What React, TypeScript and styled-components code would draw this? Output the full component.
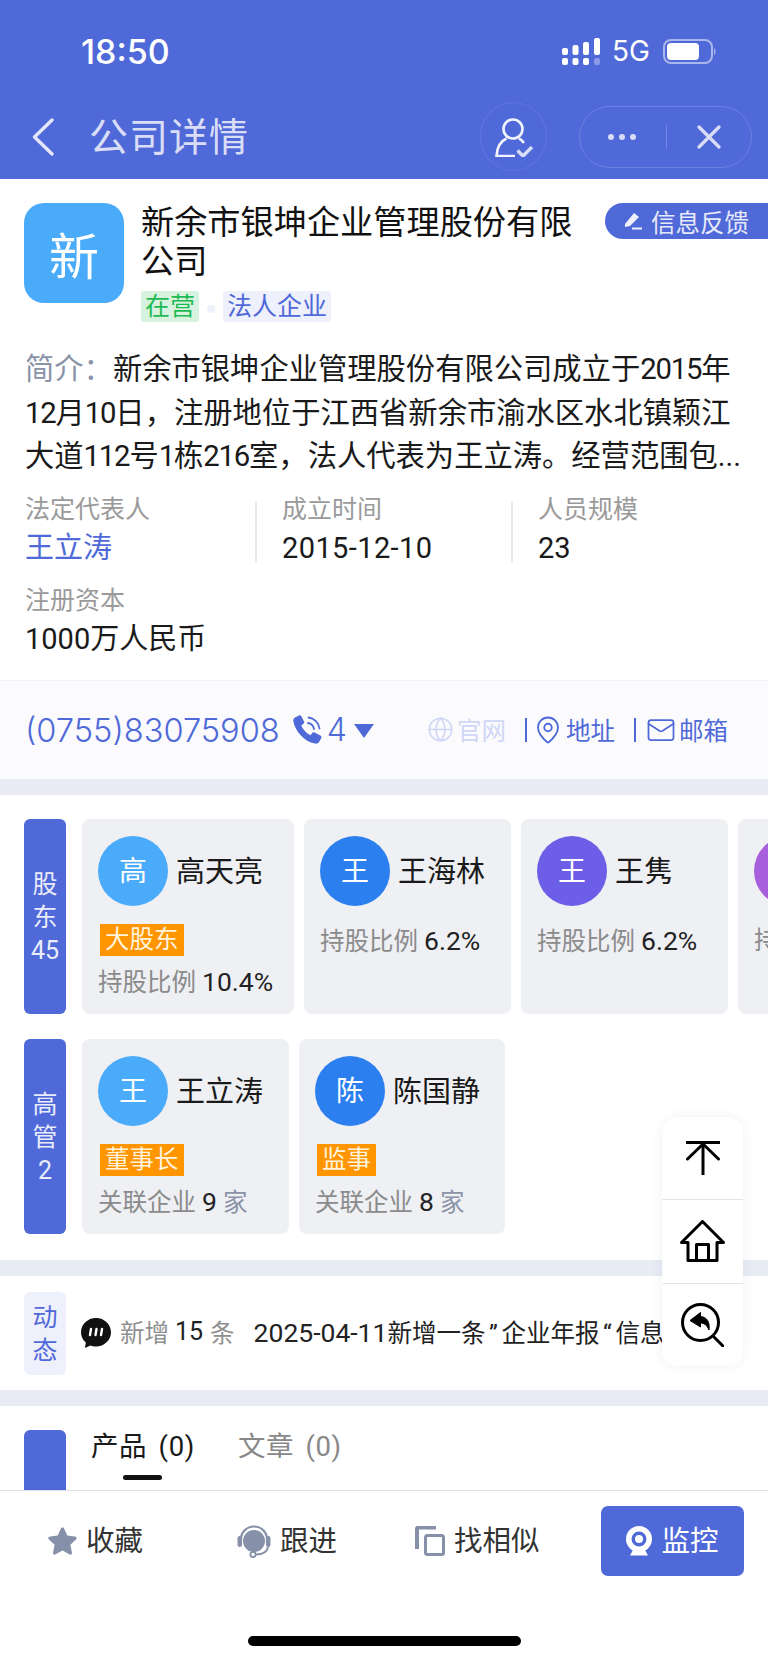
import React from 'react';
import styled, { createGlobalStyle } from 'styled-components';
import { Globe, Mail, MapPin } from 'lucide-react';

const BLUE = '#5069d8';
const FONT = 'Roboto, "Noto Sans CJK SC", "Noto Sans", sans-serif';

const GlobalStyle = createGlobalStyle`
  html, body {
    margin: 0;
    padding: 0;
    background: #fff;
  }
  * {
    box-sizing: border-box;
  }
`;

const Page = styled.div`
  width: 768px;
  height: 1663px;
  position: relative;
  display: flex;
  flex-direction: column;
  overflow: hidden;
  background: #fff;
  font-family: ${FONT};
  color: #1a1a1a;
`;

const Header = styled.header`
  flex: none;
  height: 179px;
  background: ${BLUE};
`;

const StatusBar = styled.div`
  height: 102px;
  display: flex;
  align-items: center;
  justify-content: space-between;
  padding: 0 51px 0 81px;
  color: #fff;
`;

const Time = styled.div`
  font-family: Inter, sans-serif;
  font-size: 34px;
  font-weight: 500;
`;

const StatusIcons = styled.div`
  display: flex;
  align-items: center;
`;

const NetworkLabel = styled.span`
  font-family: Inter, sans-serif;
  font-size: 28px;
  margin: 0 13px 0 12px;
`;

const NavBar = styled.div`
  height: 77px;
  display: flex;
  align-items: center;
  padding: 0 16px 8px 32px;
`;

const NavTitle = styled.h1`
  flex: 1;
  margin: 0 0 0 35px;
  padding-bottom: 6px;
  font-size: 39px;
  font-weight: 400;
  letter-spacing: 1px;
  color: #d9def6;
`;

const RoundButton = styled.div`
  width: 67px;
  height: 69px;
  border-radius: 50%;
  border: 1px solid #6075dc;
  display: flex;
  align-items: center;
  justify-content: center;
  margin-right: 32px;
`;

const Capsule = styled.div`
  width: 173px;
  height: 62px;
  border-radius: 31px;
  border: 1.5px solid #6b80e0;
  display: flex;
  align-items: center;
  justify-content: space-between;
  padding: 0 30px 0 28px;
`;

const CapsuleDots = styled.div`
  display: flex;
  gap: 5px;
`;

const CapsuleDot = styled.span`
  width: 6px;
  height: 6px;
  border-radius: 50%;
  background: #d9def6;
`;

const CapsuleDivider = styled.span`
  width: 1px;
  height: 24px;
  background: #7487e2;
`;

const Content = styled.main`
  flex: 1;
  min-height: 0;
  overflow: hidden;
`;

const Profile = styled.section`
  padding: 24px 0 26px;
`;

const CompanyHead = styled.div`
  display: flex;
  align-items: flex-start;
  padding-left: 24px;
`;

const CompanyLogo = styled.div`
  flex: none;
  width: 100px;
  height: 100px;
  border-radius: 20px;
  background: #4aabfa;
  color: #fff;
  font-size: 50px;
  display: flex;
  align-items: center;
  justify-content: center;
`;

const CompanyInfo = styled.div`
  flex: 1;
  margin-left: 17px;
`;

const CompanyName = styled.h2`
  margin: 0;
  width: 440px;
  font-size: 33.2px;
  line-height: 39px;
  font-weight: 400;
  color: #111;
`;

const TagRow = styled.div`
  display: flex;
  align-items: center;
  margin-top: 10px;
`;

const Tag = styled.span<{ $bg: string; $color: string }>`
  height: 31px;
  line-height: 31px;
  padding: 0 4px;
  border-radius: 3px;
  font-size: 25px;
  background: ${(p) => p.$bg};
  color: ${(p) => p.$color};
`;

const TagDot = styled.span`
  width: 8px;
  height: 8px;
  margin: 4px 8px 0;
  border-radius: 50%;
  background: #eef0fb;
`;

const FeedbackPill = styled.div`
  flex: none;
  width: 163px;
  height: 36px;
  border-radius: 18px 0 0 18px;
  background: ${BLUE};
  color: #e6e9fa;
  font-size: 24.5px;
  display: flex;
  align-items: center;
  padding-left: 19px;
  gap: 9px;
`;

const Intro = styled.p`
  margin: 26px 0 0;
  padding: 0 25px;
  width: 768px;
  font-size: 29.3px;
  line-height: 43.5px;
  color: #1a1a1a;
`;

const IntroLine = styled.span`
  display: block;
  white-space: nowrap;
`;

const IntroLabel = styled.span`
  color: #8a93a8;
`;

const Num = styled.span`
  letter-spacing: -1.2px;
`;

const Facts = styled.div`
  display: grid;
  grid-template-columns: 232px 256px 1fr;
  row-gap: 29px;
  margin: 22px 0 0 25px;
`;

const Fact = styled.div`
  height: 62px;
  display: flex;
  flex-direction: column;
  gap: 14px;
  padding-left: 25px;
  border-right: 2px solid #e8e9ed;
  &:nth-child(3n + 1) {
    padding-left: 0;
  }
  &:nth-child(3n),
  &:last-child {
    border-right: none;
  }
`;

const FactLabel = styled.div`
  font-size: 25px;
  line-height: 18px;
  color: #9a9a9a;
`;

const FactValue = styled.div<{ $link?: boolean }>`
  font-size: 29px;
  line-height: 30px;
  white-space: nowrap;
  color: ${(p) => (p.$link ? BLUE : '#1a1a1a')};
`;

const DateValue = styled(FactValue)`
  letter-spacing: 0.4px;
`;

const ContactBar = styled.div`
  height: 99px;
  display: flex;
  align-items: center;
  padding: 0 40px 0 25px;
  background: #fbfbfd;
  border-top: 1px solid #f3f3f6;
  color: ${BLUE};
`;

const PhoneNumber = styled.span`
  font-family: Inter, sans-serif;
  font-size: 32.6px;
  font-weight: 300;
  margin-right: 13px;
`;

const PhoneCount = styled.span`
  font-family: Inter, sans-serif;
  font-size: 32px;
  font-weight: 300;
  margin: 0 7px 0 5px;
`;

const CaretDown = styled.span`
  width: 0;
  height: 0;
  margin-top: 2px;
  border-left: 10px solid transparent;
  border-right: 10px solid transparent;
  border-top: 14px solid ${BLUE};
`;

const ContactLinks = styled.div`
  margin-left: auto;
  display: flex;
  align-items: center;
`;

const ContactLink = styled.span<{ $disabled?: boolean }>`
  display: flex;
  align-items: center;
  gap: 3px;
  font-size: 24.5px;
  color: ${(p) => (p.$disabled ? '#d0d6f5' : BLUE)};
`;

const ContactDivider = styled.span<{ $after: number }>`
  width: 2px;
  height: 24px;
  margin: 0 ${(p) => p.$after}px 0 19px;
  background: ${BLUE};
`;

const Band = styled.div`
  height: 16px;
  background: #e8ebf4;
`;

const People = styled.section`
  padding: 24px 0 26px 24px;
  display: flex;
  flex-direction: column;
  gap: 25px;
`;

const PeopleRow = styled.div`
  display: flex;
  height: 195px;
  overflow: hidden;
`;

const SideLabel = styled.div<{ $light?: boolean }>`
  flex: none;
  width: 42px;
  border-radius: 6px;
  background: ${(p) => (p.$light ? '#eef0fb' : BLUE)};
  color: ${(p) => (p.$light ? BLUE : '#e9ecfb')};
  font-size: 25px;
  line-height: 33px;
  display: flex;
  flex-direction: column;
  align-items: center;
  justify-content: center;
  padding-top: 2px;
`;

const CardStrip = styled.div`
  display: flex;
  gap: 10px;
  margin-left: 16px;
`;

const PersonCard = styled.div<{ $width: number }>`
  flex: none;
  width: ${(p) => p.$width}px;
  padding: 17px 0 0 16px;
  border-radius: 8px;
  background: #eef0f4;
`;

const PersonHead = styled.div`
  display: flex;
  align-items: center;
  gap: 8px;
`;

const Avatar = styled.div<{ $color: string }>`
  flex: none;
  width: 70px;
  height: 70px;
  border-radius: 50%;
  background: ${(p) => p.$color};
  color: #fff;
  font-size: 28px;
  display: flex;
  align-items: center;
  justify-content: center;
  padding-bottom: 4px;
`;

const PersonName = styled.span`
  font-size: 29px;
  white-space: nowrap;
  padding-bottom: 3px;
  color: #1a1a1a;
`;

const RoleTag = styled.span`
  display: table;
  height: 32px;
  line-height: 32px;
  margin: 18px 0 0 2px;
  padding: 0 5px;
  background: #ff9500;
  color: #fff3dd;
  font-size: 24.5px;
`;

const PersonStat = styled.div<{ $tight?: boolean }>`
  margin-top: ${(p) => (p.$tight ? '20px' : '11px')};
  font-size: 24.5px;
  line-height: 30px;
  white-space: nowrap;
  color: #8b8b8b;
`;

const StatValue = styled.span`
  color: #222;
  font-size: 26.5px;
  margin: 0 6px;
`;

const StatUnit = styled.span`
  color: #8a93a8;
`;

const Updates = styled.section`
  padding: 16px 0 15px 24px;
  display: flex;
  height: 114px;
  overflow: hidden;
`;

const UpdatesLine = styled.div`
  display: flex;
  align-items: center;
  margin-left: 15px;
  width: 585px;
  padding-bottom: 3px;
  overflow: hidden;
  white-space: nowrap;
  font-size: 24.5px;
  & > svg {
    flex: none;
    margin-top: 3px;
  }
`;

const MutedText = styled.span`
  color: #8f8f8f;
  margin-left: 9px;
`;

const UpdateNumber = styled.span`
  color: #222;
  font-size: 25px;
  margin-left: 6px;
`;

const UpdateCount = styled(MutedText)`
  margin: 0 19px 0 7px;
`;

const UpdateText = styled.span`
  color: #222;
`;

const UpdateDate = styled.span`
  font-size: 26.5px;
`;

const Quote = styled.span`
  display: inline-block;
  width: 16px;
  text-align: center;
`;

const Products = styled.section`
  display: flex;
  padding: 24px 0 0 24px;
`;

const ProductLabel = styled.div`
  flex: none;
  width: 42px;
  height: 90px;
  border-radius: 6px 6px 0 0;
  background: ${BLUE};
`;

const Tabs = styled.div`
  display: flex;
  gap: 43px;
  margin-left: 25px;
`;

const Tab = styled.div<{ $active?: boolean }>`
  position: relative;
  height: 45px;
  font-size: 27.5px;
  line-height: 33px;
  letter-spacing: 0.6px;
  word-spacing: 4px;
  white-space: nowrap;
  color: ${(p) => (p.$active ? '#1a1a1a' : '#888')};
  ${(p) =>
    p.$active &&
    `&::after {
      content: '';
      position: absolute;
      left: 32px;
      bottom: -5px;
      width: 39px;
      height: 5px;
      border-radius: 3px;
      background: #111;
    }`}
`;

const BottomBar = styled.footer`
  flex: none;
  height: 173px;
  background: #fff;
  border-top: 1.5px solid #dedfe3;
  display: flex;
  flex-direction: column;
  align-items: center;
  z-index: 1;
`;

const Actions = styled.div`
  width: 100%;
  height: 86px;
  margin-top: 15px;
  padding: 0 24px 0 48px;
  display: flex;
  align-items: flex-start;
`;

const Action = styled.div<{ $width: number }>`
  width: ${(p) => p.$width}px;
  height: 70px;
  display: flex;
  align-items: center;
  gap: 9px;
  font-size: 28.5px;
  color: #333;
`;

const ActionText = styled.span`
  padding-bottom: 5px;
`;

const PrimaryAction = styled.div`
  flex: none;
  width: 143px;
  height: 70px;
  margin-left: auto;
  border-radius: 7px;
  background: ${BLUE};
  color: #fff;
  font-size: 28.5px;
  display: flex;
  align-items: center;
  justify-content: center;
  gap: 9px;
`;

const HomeIndicator = styled.div`
  width: 273px;
  height: 10px;
  margin-top: 44px;
  border-radius: 5px;
  background: #000;
`;

const FloatPanel = styled.aside`
  position: absolute;
  left: 662px;
  top: 1117px;
  width: 81px;
  height: 249px;
  border-radius: 16px;
  background: rgba(255, 255, 255, 0.93);
  box-shadow: 0 0 12px rgba(40, 50, 90, 0.07);
  display: flex;
  flex-direction: column;
  z-index: 2;
`;

const FloatButton = styled.div`
  flex: 1;
  display: flex;
  align-items: center;
  justify-content: center;
  & + & {
    border-top: 1.5px solid #e4e4e6;
  }
`;

const SignalIcon = () => (
  <svg width="38" height="27" viewBox="0 0 38 27" fill="#fff">
    <rect x="0" y="10" width="6" height="7" rx="2" />
    <rect x="0" y="20" width="6" height="7" rx="2" />
    <rect x="10.5" y="7" width="6" height="10" rx="2" />
    <rect x="10.5" y="20" width="6" height="7" rx="2" />
    <rect x="21" y="4" width="6" height="13" rx="2" />
    <rect x="21" y="20" width="6" height="7" rx="2" />
    <rect x="32" y="0" width="6" height="17" rx="2" />
    <rect x="32" y="20" width="6" height="7" rx="2" fill="#8a9ae6" />
  </svg>
);

const BatteryIcon = () => (
  <svg width="54" height="25" viewBox="0 0 54 25">
    <rect x="1" y="1" width="48" height="23" rx="7" fill="none" stroke="#aab6ec" strokeWidth="2" />
    <rect x="4" y="4" width="32" height="17" rx="4" fill="#fff" />
    <path d="M51 9 C53 10 53 15 51 16 Z" fill="#aab6ec" />
  </svg>
);

const BackIcon = () => (
  <svg width="22" height="38" viewBox="0 0 22 38" fill="none" stroke="#e3e7f9" strokeWidth="3.4" strokeLinecap="round" strokeLinejoin="round">
    <path d="M20 2 L2.5 19 L20 36" />
  </svg>
);

const CloseIcon = () => (
  <svg width="24" height="24" viewBox="0 0 24 24" fill="none" stroke="#d9def6" strokeWidth="3.2" strokeLinecap="round">
    <path d="M2 2 L22 22 M22 2 L2 22" />
  </svg>
);

const PersonCheckIcon = () => (
  <svg width="40" height="40" viewBox="0 0 40 40" fill="none" stroke="#f2f4fd" strokeWidth="2.6">
    <circle cx="19" cy="12" r="9.5" />
    <path d="M12.5 21.5 C7 24 3 30 2.5 39 H21" />
    <path d="M25 21.5 C27 22.5 28.5 24 30 26" />
    <path d="M23.5 33.5 L29 39 L38 30" strokeWidth="3.4" stroke="#d9def6" />
  </svg>
);

const PencilIcon = () => (
  <svg width="18" height="18" viewBox="0 0 18 18" fill="#eef0fb">
    <path d="M1 12 L10 1 L15 5 L6 14 L1 15 Z" />
    <rect x="8" y="15.5" width="10" height="2" />
  </svg>
);

const PhoneCallIcon = () => (
  <svg width="29" height="29" viewBox="0 0 29 29" fill="none">
    <path
      d="M2 2.5 L6 0.5 C7 0 8 0.5 8.5 1.5 L11 6.5 C11.4 7.4 11.2 8.2 10.5 8.8 L8.3 10.6 C9.6 14 13.6 18.6 17.4 20.2 L19.2 18 C19.8 17.3 20.8 17 21.6 17.5 L27.4 20.6 C28.4 21.2 28.8 22.2 28.2 23.2 L26.2 26.8 C25.4 28.4 23.8 29 22 28.6 C11 26 2.6 17 0.4 6.4 C0 4.8 0.6 3.4 2 2.5 Z"
      fill={BLUE}
    />
    <path d="M15 8 C18 8.5 20.5 11 21 14" stroke={BLUE} strokeWidth="1.8" strokeLinecap="round" />
    <path d="M15.5 2.5 C21 3 26 8 26.5 13.5" stroke={BLUE} strokeWidth="1.8" strokeLinecap="round" />
  </svg>
);

const BubbleIcon = () => (
  <svg width="30" height="30" viewBox="0 0 30 30">
    <path
      d="M15 0 C23.3 0 30 6.4 30 14.3 C30 22.2 23.3 28.6 15 28.6 C13 28.6 11 28.2 9.4 27.6 L4 30 L4.8 24.6 C1.8 22 0 18.4 0 14.3 C0 6.4 6.7 0 15 0 Z"
      fill="#111"
    />
    <path d="M10 11 L9 17 M15.5 11 L14.5 17 M21 11 L20 17" stroke="#fff" strokeWidth="2.4" strokeLinecap="round" />
  </svg>
);

const StarIcon = () => (
  <svg width="29" height="28" viewBox="0 0 29 28">
    <path
      d="M14.5 0.5 C15.4 0.5 15.9 1 16.3 1.9 L19.3 8.6 L26.8 9.5 C28.6 9.7 29.3 11.4 28 12.6 L22.4 17.8 L23.9 25.4 C24.3 27.2 22.8 28.2 21.3 27.3 L14.5 23.6 L7.7 27.3 C6.2 28.2 4.7 27.2 5.1 25.4 L6.6 17.8 L1 12.6 C-0.3 11.4 0.4 9.7 2.2 9.5 L9.7 8.6 L12.7 1.9 C13.1 1 13.6 0.5 14.5 0.5 Z"
      fill="#8690a8"
    />
  </svg>
);

const HeadsetIcon = () => (
  <svg width="34" height="33" viewBox="0 0 34 33" fill="none">
    <circle cx="17" cy="16" r="11" fill="#8690a8" />
    <path d="M4 18 V14 C4 7 10 1.5 17 1.5 C24 1.5 30 7 30 14 V18" stroke="#8690a8" strokeWidth="2.2" />
    <rect x="0.5" y="11" width="4.5" height="11" rx="2.2" fill="#8690a8" />
    <rect x="29" y="11" width="4.5" height="11" rx="2.2" fill="#8690a8" />
    <path d="M31 22 C30 27 25 29.5 19 29.5" stroke="#8690a8" strokeWidth="2" />
    <circle cx="16" cy="29.5" r="2.6" stroke="#8690a8" strokeWidth="1.8" fill="#fff" />
  </svg>
);

const CopyIcon = () => (
  <svg width="30" height="30" viewBox="0 0 30 30" fill="none">
    <path d="M2 23 V3 C2 2 2.8 1.5 3.5 1.5 H21" stroke="#8690a8" strokeWidth="4" />
    <rect x="10.5" y="9.5" width="18" height="19" rx="2" stroke="#8690a8" strokeWidth="3" />
  </svg>
);

const WebcamIcon = () => (
  <svg width="26" height="30" viewBox="0 0 26 30">
    <path d="M7 24 H19 L22 29.5 H4 Z" fill="#fff" />
    <circle cx="13" cy="13" r="13" fill="#fff" />
    <circle cx="13" cy="13" r="7.5" fill={BLUE} />
    <circle cx="13" cy="13" r="4" fill="#fff" />
  </svg>
);

const ToTopIcon = () => (
  <svg width="34" height="34" viewBox="0 0 34 34" fill="none" stroke="#000" strokeWidth="3">
    <path d="M0 1.5 H34" />
    <path d="M17 2 V34" strokeLinecap="round" />
    <path d="M1.5 18 L17 3 L32.5 18" strokeLinecap="round" />
  </svg>
);

const HomeIcon = () => (
  <svg width="45" height="42" viewBox="0 0 45 42" fill="none" stroke="#000" strokeWidth="3" strokeLinejoin="round">
    <path d="M22.5 1.5 L43.5 22.5 H37 V40.5 H8 V22.5 H1.5 Z" />
    <path d="M16.5 40.5 V24.5 H28.5 V40.5" />
  </svg>
);

const SearchBackIcon = () => (
  <svg width="43" height="44" viewBox="0 0 43 44" fill="none">
    <circle cx="19.5" cy="19.5" r="18" stroke="#000" strokeWidth="3" />
    <path d="M32 33 L42 43" stroke="#000" strokeWidth="3" strokeLinecap="round" />
    <path
      d="M19.5 9.5 L9 17.5 L19.5 24 V20 C23 20 26 22 28 27 C29 19 26 14 19.5 13.5 Z"
      fill="#000"
      stroke="#000"
      strokeLinejoin="round"
    />
  </svg>
);

interface Person {
  name: string;
  surname: string;
  color: string;
  role?: string;
  statLabel: string;
  statValue?: string;
  statUnit?: string;
  width: number;
}

const shareholders: Person[] = [
  { name: '高天亮', surname: '高', color: '#4aabfa', role: '大股东', statLabel: '持股比例', statValue: '10.4%', width: 212 },
  { name: '王海林', surname: '王', color: '#2b7fee', statLabel: '持股比例', statValue: '6.2%', width: 207 },
  { name: '王隽', surname: '王', color: '#6c5ee6', statLabel: '持股比例', statValue: '6.2%', width: 207 },
  { name: '', surname: '', color: '#a85fdc', statLabel: '持', width: 207 },
];

const managers: Person[] = [
  { name: '王立涛', surname: '王', color: '#4aabfa', role: '董事长', statLabel: '关联企业', statValue: '9', statUnit: '家', width: 207 },
  { name: '陈国静', surname: '陈', color: '#2b7fee', role: '监事', statLabel: '关联企业', statValue: '8', statUnit: '家', width: 206 },
];

const PersonTile: React.FC<{ person: Person }> = ({ person }) => (
  <PersonCard $width={person.width}>
    <PersonHead>
      <Avatar $color={person.color}>{person.surname}</Avatar>
      <PersonName>{person.name}</PersonName>
    </PersonHead>
    {person.role && <RoleTag>{person.role}</RoleTag>}
    <PersonStat $tight={!person.role}>
      {person.statLabel}
      {person.statValue && <StatValue>{person.statValue}</StatValue>}
      {person.statUnit && <StatUnit>{person.statUnit}</StatUnit>}
    </PersonStat>
  </PersonCard>
);

const App: React.FC = () => (
  <Page>
    <GlobalStyle />
    <Header>
      <StatusBar>
        <Time>18:50</Time>
        <StatusIcons>
          <SignalIcon />
          <NetworkLabel>5G</NetworkLabel>
          <BatteryIcon />
        </StatusIcons>
      </StatusBar>
      <NavBar>
        <BackIcon />
        <NavTitle>公司详情</NavTitle>
        <RoundButton>
          <PersonCheckIcon />
        </RoundButton>
        <Capsule>
          <CapsuleDots>
            <CapsuleDot />
            <CapsuleDot />
            <CapsuleDot />
          </CapsuleDots>
          <CapsuleDivider />
          <CloseIcon />
        </Capsule>
      </NavBar>
    </Header>

    <Content>
      <Profile>
        <CompanyHead>
          <CompanyLogo>新</CompanyLogo>
          <CompanyInfo>
            <CompanyName>新余市银坤企业管理股份有限公司</CompanyName>
            <TagRow>
              <Tag $bg="#d7f3df" $color="#1fba54">在营</Tag>
              <TagDot />
              <Tag $bg="#eef0fb" $color={BLUE}>法人企业</Tag>
            </TagRow>
          </CompanyInfo>
          <FeedbackPill>
            <PencilIcon />
            信息反馈
          </FeedbackPill>
        </CompanyHead>

        <Intro>
          <IntroLine>
            <IntroLabel>简介：</IntroLabel>新余市银坤企业管理股份有限公司成立于<Num>2015</Num>年
          </IntroLine>
          <IntroLine>
            <Num>12</Num>月<Num>10</Num>日，注册地位于江西省新余市渝水区水北镇颖江
          </IntroLine>
          <IntroLine>
            大道<Num>112</Num>号<Num>1</Num>栋<Num>216</Num>室，法人代表为王立涛。经营范围包...
          </IntroLine>
        </Intro>

        <Facts>
          <Fact>
            <FactLabel>法定代表人</FactLabel>
            <FactValue $link>王立涛</FactValue>
          </Fact>
          <Fact>
            <FactLabel>成立时间</FactLabel>
            <DateValue>2015-12-10</DateValue>
          </Fact>
          <Fact>
            <FactLabel>人员规模</FactLabel>
            <FactValue>23</FactValue>
          </Fact>
          <Fact>
            <FactLabel>注册资本</FactLabel>
            <FactValue>1000万人民币</FactValue>
          </Fact>
        </Facts>
      </Profile>

      <ContactBar>
        <PhoneNumber>(0755)83075908</PhoneNumber>
        <PhoneCallIcon />
        <PhoneCount>4</PhoneCount>
        <CaretDown />
        <ContactLinks>
          <ContactLink $disabled>
            <Globe size={27} strokeWidth={1.4} />
            官网
          </ContactLink>
          <ContactDivider $after={6} />
          <ContactLink>
            <MapPin size={30} strokeWidth={1.5} />
            地址
          </ContactLink>
          <ContactDivider $after={10} />
          <ContactLink>
            <Mail size={30} strokeWidth={1.4} />
            邮箱
          </ContactLink>
        </ContactLinks>
      </ContactBar>

      <Band />

      <People>
        <PeopleRow>
          <SideLabel>
            <span>股</span>
            <span>东</span>
            <span>45</span>
          </SideLabel>
          <CardStrip>
            {shareholders.map((person, index) => (
              <PersonTile key={index} person={person} />
            ))}
          </CardStrip>
        </PeopleRow>
        <PeopleRow>
          <SideLabel>
            <span>高</span>
            <span>管</span>
            <span>2</span>
          </SideLabel>
          <CardStrip>
            {managers.map((person, index) => (
              <PersonTile key={index} person={person} />
            ))}
          </CardStrip>
        </PeopleRow>
      </People>

      <Band />

      <Updates>
        <SideLabel $light>
          <span>动</span>
          <span>态</span>
        </SideLabel>
        <UpdatesLine>
          <BubbleIcon />
          <MutedText>新增</MutedText>
          <UpdateNumber>15</UpdateNumber>
          <UpdateCount>条</UpdateCount>
          <UpdateText>
            <UpdateDate>2025-04-11</UpdateDate>新增一条<Quote>”</Quote>企业年报<Quote>“</Quote>信息
          </UpdateText>
        </UpdatesLine>
      </Updates>

      <Band />

      <Products>
        <ProductLabel />
        <Tabs>
          <Tab $active>产品 (0)</Tab>
          <Tab>文章 (0)</Tab>
        </Tabs>
      </Products>
    </Content>

    <BottomBar>
      <Actions>
        <Action $width={189}>
          <StarIcon />
          <ActionText>收藏</ActionText>
        </Action>
        <Action $width={178}>
          <HeadsetIcon />
          <ActionText>跟进</ActionText>
        </Action>
        <Action $width={160}>
          <CopyIcon />
          <ActionText>找相似</ActionText>
        </Action>
        <PrimaryAction>
          <WebcamIcon />
          <ActionText>监控</ActionText>
        </PrimaryAction>
      </Actions>
      <HomeIndicator />
    </BottomBar>

    <FloatPanel>
      <FloatButton>
        <ToTopIcon />
      </FloatButton>
      <FloatButton>
        <HomeIcon />
      </FloatButton>
      <FloatButton>
        <SearchBackIcon />
      </FloatButton>
    </FloatPanel>
  </Page>
);

export default App;
